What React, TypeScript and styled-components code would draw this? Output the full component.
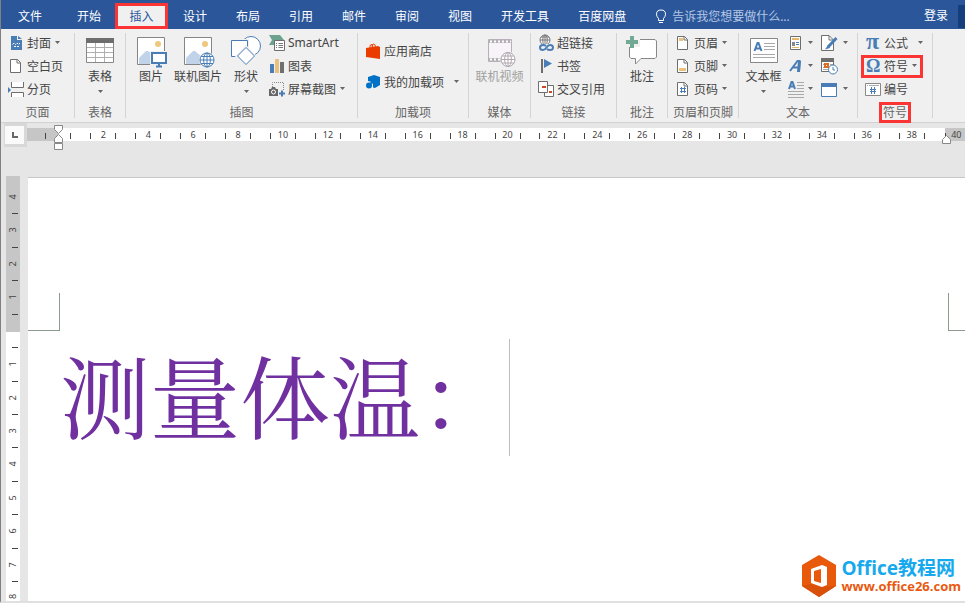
import React from "react";
import styled, { createGlobalStyle, css } from "styled-components";

const GlobalStyle = createGlobalStyle`
  *, *::before, *::after { box-sizing: border-box; }
  body { margin: 0; background: #e6e6e6; }
  body, button, input {
    font-family: "Noto Sans", "Noto Sans CJK SC", sans-serif;
    font-size: 12px;
  }
  button { border: 0; padding: 0; margin: 0; background: none; color: inherit; white-space: nowrap; }
`;

const blue = "#2b579a";
const red = "#fb3434";
const ink = "#444444";
const steel = "#4a7db5";
const line = "#6e6e6e";

const Window = styled.div`
  display: flex;
  flex-direction: column;
  min-height: 100vh;
  overflow: hidden;
  border-left: 1px solid #808080;
  border-bottom: 2px solid #e0e0e0;
  color: ${ink};
`;

const TabBar = styled.nav`
  display: flex;
  align-items: stretch;
  height: 29px;
  background: ${blue};
  color: #ffffff;
`;

const FileTab = styled.button`
  width: 58px;
  margin-right: 4px;
  padding-top: 3px;
`;

const Tab = styled.button<{ $active?: boolean }>`
  flex: none;
  margin-right: 1px;
  padding: 3px 14px 0;
  ${(p) =>
    p.$active &&
    css`
      width: 53px;
      margin: 3px 1px 0 -1px;
      padding: 0;
      border: 3px solid ${red};
      background: #f0f0f0;
      color: ${blue};
    `}
`;

const TellMe = styled.label`
  display: flex;
  align-items: center;
  flex: 1;
  gap: 5px;
  min-width: 0;
  padding: 3px 0 0 14px;
`;

const TellMeInput = styled.input`
  flex: 1;
  min-width: 0;
  padding: 0;
  border: 0;
  outline: 0;
  background: transparent;
  color: #ffffff;
  &::placeholder { color: #b4c6e4; opacity: 1; }
`;

const SignIn = styled.a`
  padding: 3px 10px 0;
  line-height: 26px;
  color: #ffffff;
  text-decoration: none;
`;

const Share = styled.span`
  width: 7px;
  margin: 5px 0 1px;
  background: #143f7c;
`;

const RibbonBar = styled.div`
  display: flex;
  height: 94px;
  background: #f0f0f0;
  border-bottom: 1px solid #d2d2d2;
`;

const Group = styled.section<{ $w: number }>`
  display: flex;
  flex-direction: column;
  flex: none;
  width: ${(p) => p.$w}px;
  padding-top: 3px;
`;

const Divider = styled.span`
  flex: none;
  width: 1px;
  margin: 4px 0;
  background: #d4d4d4;
`;

const Tools = styled.div<{ $pad?: number }>`
  display: flex;
  flex: none;
  height: 70px;
  padding-left: ${(p) => p.$pad ?? 0}px;
`;

const Caption = styled.h2<{ $marked?: boolean }>`
  flex: none;
  align-self: center;
  margin: 0;
  padding: 0 1px;
  border: 3px solid ${(p) => (p.$marked ? red : "transparent")};
  font-size: 12px;
  font-weight: 400;
  line-height: 15px;
  color: #666666;
  white-space: nowrap;
`;

const Stack = styled.div<{ $loose?: boolean }>`
  display: flex;
  flex-direction: column;
  align-items: flex-start;
  padding-top: ${(p) => (p.$loose ? 4 : 0)}px;
  & > button { height: ${(p) => (p.$loose ? 31 : 23)}px; }
`;

const SmallButton = styled.button<{ $gap?: number; $marked?: boolean }>`
  display: flex;
  align-items: center;
  gap: ${(p) => p.$gap ?? 3}px;
  padding-bottom: 2px;
  ${(p) =>
    p.$marked &&
    css`
      margin: 0 -4px;
      padding: 0 3px 2px 1px;
      border: 3px solid ${red};
    `}
`;

const BigButton = styled.button<{ $w: number; $dim?: boolean }>`
  display: flex;
  flex-direction: column;
  align-items: center;
  flex: none;
  width: ${(p) => p.$w}px;
  padding-top: 4px;
  line-height: 18px;
  color: ${(p) => (p.$dim ? "#a0a0a0" : ink)};
`;

const ArrowIcon = styled.svg<{ $space?: number }>`
  display: block;
  flex: none;
  margin-left: ${(p) => p.$space ?? 0}px;
`;

const BigArrow = styled.span`
  padding-top: 4px;
`;

const Icon = styled.svg`
  display: block;
  flex: none;
  overflow: visible;
`;

const Glyph = styled.text`
  font-family: "Liberation Serif", serif;
  font-weight: 700;
  fill: ${steel};
`;

const Arrow = ({ space }: { space?: number }) => (
  <ArrowIcon $space={space} width="5" height="3" viewBox="0 0 5 3" aria-hidden="true">
    <path d="M0 0h5L2.5 3z" fill="#666" />
  </ArrowIcon>
);

const S = ({ children, w = 16 }: { children: React.ReactNode; w?: number }) => (
  <Icon width={w} height="16" viewBox={`0 0 ${w} 16`} fill="none" aria-hidden="true">{children}</Icon>
);
const L = ({ children }: { children: React.ReactNode }) => (
  <Icon width="32" height="32" viewBox="0 0 32 32" fill="none" aria-hidden="true">{children}</Icon>
);

const Globe = ({ x, y, r, c }: { x: number; y: number; r: number; c: string }) => (
  <g transform={`translate(${x} ${y})`} stroke={c}>
    <circle r={r + 1} fill="#f0f0f0" stroke="none" />
    <circle r={r} fill="#fff" />
    <ellipse rx={r * 0.48} ry={r} />
    <path d={`M0 ${-r}V${r}M${-r} 0H${r}M${-r * 0.86} ${-r * 0.5}H${r * 0.86}M${-r * 0.86} ${r * 0.5}H${r * 0.86}`} />
  </g>
);

const PageShape = ({ x = 2.5 }: { x?: number }) => (
  <g transform={`translate(${x} 1.5)`}>
    <path d="M0 0H7L10 3V13H0z" fill="#fff" stroke={line} />
    <path d="M6.500 0V3.500H10" stroke={line} />
  </g>
);

const CoverIcon = () => (
  <S>
    <path d="M3 1H9V5H14V15H3z" fill={steel} />
    <path d="M10 1L14 4H10z" fill={steel} />
    <path d="M4.500 9.500l1.500-1.500 1.500 1.500 1.500-1.500 1.500 1.500 1.500-1.500M6 11.500h6" stroke="#fff" strokeDasharray="2 1" />
  </S>
);
const BlankIcon = () => <S><PageShape /></S>;
const BreakIcon = () => (
  <S>
    <path d="M3.500 1V6.500H15.500V1" fill="#fff" stroke={line} />
    <path d="M3.500 16V11.500H15.500V16" fill="#fff" stroke={line} />
    <path d="M0 6L3 9 0 12z" fill={steel} />
  </S>
);
const TableIcon = () => (
  <L>
    <path d="M2.500 2.500H29.500V26.500H2.500z" fill="#fff" stroke="#888" />
    <path d="M2 2H30V7H2z" fill="#6e6e6e" />
    <path d="M11.500 7V26M20.500 7V26M3 11.500H29M3 16.500H29M3 21.500H29" stroke="#b0b0b0" />
  </L>
);
const PictureBase = () => (
  <>
    <path d="M2.500 1.500H29.500V28.500H2.500z" fill="#fff" stroke="#858585" />
    <circle cx="23" cy="8" r="3" fill="#efc77e" />
    <path d="M4 28V22L11 15H13L20 21V28z" fill="#c0d3e8" />
  </>
);
const PictureIcon = () => (
  <L>
    <PictureBase />
    <path d="M15 15H33V32H15z" fill="#f0f0f0" />
    <path d="M17 17H31V27H17z" fill="#fff" stroke={steel} strokeWidth="2" />
    <path d="M24 28V30M21 30.500H27" stroke={steel} strokeWidth="2" />
  </L>
);
const OnlinePictureIcon = () => <L><PictureBase /><Globe x={25} y={24} r={7} c={steel} /></L>;
const ShapesIcon = () => (
  <L>
    <circle cx="21" cy="10" r="9.500" fill="#fff" stroke={steel} />
    <path d="M1.500 4.500H17.500V21.500H1.500z" fill="#fff" stroke="#f0f0f0" strokeWidth="3" />
    <path d="M1.500 4.500H17.500V20.500H1.500z" fill="#fff" stroke={steel} />
    <path d="M16 11L25 20.500 16 30 7 20.500z" fill="#fff" stroke="#f0f0f0" strokeWidth="3" />
    <path d="M16 11.500L24.500 20 16 28.500 7.500 20z" fill="#fff" stroke={steel} />
  </L>
);
const SmartArtIcon = () => (
  <S>
    <path d="M0 0H11L15 5V6H5V10H0L3 5z" fill="#6ba38f" />
    <path d="M5.500 5.500H15.500V15.500H5.500z" fill="#fff" stroke={line} />
    <path d="M7 8.500H8M9.500 8.500H14M7 10.500H8M9.500 10.500H14M7 12.500H8M9.500 12.500H14" stroke="#777" />
  </S>
);
const ChartIcon = () => (
  <S><path d="M1 6H5V15H1z" fill={steel} /><path d="M6 1H10V15H6z" fill="#e9c07c" /><path d="M11 4H15V15H11z" fill="#707070" /></S>
);
const ScreenshotIcon = () => (
  <S>
    <path d="M3.500 6V1.500H14.500V10" stroke="#888" strokeDasharray="1 1" />
    <path d="M0 8H2L3 6H6L7 8H9V15H0z" fill="#666" />
    <circle cx="4.500" cy="11" r="2" stroke="#fff" />
    <path d="M10 12.500H16M13 9.500V15.500" stroke={steel} strokeWidth="2" />
  </S>
);
const StoreIcon = () => (
  <S>
    <path d="M1 5L13 3 15 4V16L1 14z" fill="#eb3c00" />
    <path d="M5 5Q4 1.500 7 1.500L8 4M7 4Q7 .500 9 1 10 1 10.500 4" stroke="#eb3c00" />
  </S>
);
const AddinsIcon = () => (
  <S>
    <path d="M9 1L15 3V11L10 14 8 13.500V10Q6 7 3 7V3z" fill="#0072c6" />
    <circle cx="4" cy="11.500" r="3" fill="#0072c6" />
    <path d="M5 10L7 8.500" stroke="#0072c6" strokeWidth="2" />
  </S>
);
const VideoIcon = () => (
  <L>
    <path d="M4.500 3.500H27.500V25.500H4.500z" fill="#f8f3f8" stroke="#b8b0b8" />
    <path d="M5 4H27V7H5zM5 22H18V25H5z" fill="#b4afb4" />
    <path d="M6 5.500H27M6 23.500H18" stroke="#fff" strokeWidth="2" strokeDasharray="2 2" />
    <Globe x={24} y={23.5} r={7} c="#b0a8b0" />
  </L>
);
const LinkIcon = () => (
  <S>
    <g transform="translate(7 5)" stroke="#777"><circle r="5" fill="#fff" /><ellipse rx="2.200" ry="5" /><path d="M-5 0H5M-4-3H4M0-5V5" /></g>
    <path d="M1 9H16V16H1z" fill="#f0f0f0" />
    <path d="M8 11Q7 10 5 10 2 10 2 12.500T5 15Q7 15 8.500 12.500T12 10Q15 10 15 12.500T12 15Q10 15 9 14" stroke={steel} strokeWidth="2" />
  </S>
);
const BookmarkIcon = () => <S><path d="M3 1H5V15H3z" fill={line} /><path d="M6 1L14 5.500 6 10z" fill={steel} /></S>;
const CrossRefIcon = () => (
  <S>
    <path d="M6.500 4.500H15.500V15.500H6.500z" fill="#fff" stroke={line} />
    <path d="M.500.500H9.500V11.500H.500z" fill="#fff" stroke={line} />
    <path d="M4 6H8M11 11H14" stroke="#d24726" strokeWidth="2" />
  </S>
);
const CommentIcon = () => (
  <L>
    <path d="M4.500 4.500Q4.500 3.500 6 3.500H29L30.500 5V21L29 22.500H15L9.500 28V22.500H5L3.500 21V7z" fill="#fff" stroke="#888" />
    <path d="M0 0H14V11H0z" fill="#f0f0f0" />
    <path d="M4 0H8V4H12V8H8V12H4V8H0V4H4z" fill="#72a995" />
  </L>
);
const HeaderIcon = () => <S><PageShape /><path d="M4 3H8V6H4z" fill="#edc078" /></S>;
const FooterIcon = () => <S><PageShape /><path d="M4 10H11V13H4z" fill="#edc078" /></S>;
const NumberIcon = () => (
  <S><PageShape /><path d="M6.500 6V12M9.500 6V12M5 7.500H11M5 10.500H11" stroke={steel} /></S>
);
const TextBoxIcon = () => (
  <L>
    <path d="M2.500 2.500H29.500V26.500H2.500z" fill="#fff" stroke="#888" />
    <path d="M6.500 15L9.500 7H10.500L13.500 15M7.500 12.500H12.500" stroke={steel} strokeWidth="2" />
    <path d="M16 7.500H27M16 10.500H27M16 13.500H27M5 18.500H27M5 21.500H27" stroke="#a8a8a8" />
  </L>
);
const QuickPartsIcon = () => (
  <S>
    <path d="M2.500 1.500H12.500V14.500H2.500z" fill="#fff" stroke={line} />
    <path d="M4 3H11V5H4z" fill="#e7b765" /><path d="M4 7H7V11H4z" fill="#888" />
    <path d="M8 7.500H11M8 9.500H11" stroke={steel} /><path d="M4 12.500H11" stroke="#e7b765" />
  </S>
);
const WordArtIcon = () => (
  <S><path d="M2 13L9.500 3H11.500L11 13M5 9.500H11" stroke={steel} strokeWidth="2" /><path d="M10 3H13L12 14H9z" fill={steel} /></S>
);
const DropCapIcon = () => (
  <S>
    <path d="M1 8L3.500 1H4.500L7 8M2 5.500H6" stroke={steel} strokeWidth="2" />
    <path d="M9 1.500H16M9 4.500H16M9 7.500H16M0 10.500H16M0 13.500H16M0 16.500H16" stroke="#a8a8a8" />
  </S>
);
const SignatureIcon = () => (
  <S w={18}>
    <path d="M.500.500H8L12.500 5V15.500H.500z" fill="#fff" stroke={line} />
    <path d="M8 .500V5H12" stroke={line} />
    <path d="M15.500 3L7 12" stroke={steel} strokeWidth="3" /><path d="M7 10L4 14.500 9 13z" fill={steel} />
  </S>
);
const DateIcon = () => (
  <S w={18}>
    <path d="M.500 1.500H12.500V13.500H.500z" fill="#fff" stroke={line} /><path d="M0 0H13V4H0z" fill={line} />
    <path d="M2 6.500H3M9 6.500H12M2 9.500H3M2 11.500H7" stroke="#aaa" />
    <path d="M4 6H7V9H4z" stroke="#e06b1f" strokeWidth="2" />
    <circle cx="12" cy="11.500" r="4.500" fill="#fff" stroke={steel} /><path d="M12 9V12H14" stroke={steel} />
  </S>
);
const ObjectIcon = () => (
  <S w={18}><path d="M.500 2.500H15.500V15.500H.500z" fill="#fff" stroke={steel} /><path d="M0 2H16V6H0z" fill={steel} /></S>
);
const PiIcon = () => <S><Glyph x="1" y="14" fontSize="24">π</Glyph></S>;
const OmegaIcon = () => <S><Glyph x="1" y="14" fontSize="18">Ω</Glyph></S>;
const ListNumberIcon = () => (
  <S>
    <path d="M.500 2.500H15.500V14.500H.500z" fill="#fff" stroke="#888" />
    <path d="M6.500 6V13M9.500 6V13M5 8.500H11M5 10.500H11" stroke={steel} />
    <path d="M2 4.500H3M4 4.500H14" stroke="#aaa" />
  </S>
);
const BulbIcon = () => (
  <Icon width="12" height="15" viewBox="0 0 12 15" fill="none" stroke="#fff" aria-hidden="true">
    <path d="M3.500 9.500Q1.500 7.500 1.500 5.200 1.500 1 6 1T10.500 5.200Q10.500 7.500 8.500 9.500V11.500H3.500z" />
    <path d="M4 13.500H8" />
  </Icon>
);

const Small = (p: { icon: React.ReactNode; label: string; gap?: number; arrow?: number; marked?: boolean }) => (
  <SmallButton type="button" $gap={p.gap} $marked={p.marked}>
    {p.icon}
    <span>{p.label}</span>
    {p.arrow !== undefined && <Arrow space={p.arrow} />}
  </SmallButton>
);

const IconOnly = ({ icon, name, arrow = true }: { icon: React.ReactNode; name: string; arrow?: boolean }) => (
  <SmallButton type="button" $gap={4} aria-label={name}>{icon}{arrow && <Arrow />}</SmallButton>
);

const Big = (p: { icon: React.ReactNode; label: string; w: number; arrow?: boolean; dim?: boolean }) => (
  <BigButton type="button" $w={p.w} $dim={p.dim} disabled={p.dim}>
    {p.icon}
    <span>{p.label}</span>
    {p.arrow && <BigArrow><Arrow /></BigArrow>}
  </BigButton>
);

const RibbonGroup = (p: { title: string; w: number; pad?: number; marked?: boolean; children: React.ReactNode }) => (
  <>
    <Group $w={p.w}>
      <Tools $pad={p.pad}>{p.children}</Tools>
      <Caption $marked={p.marked}>{p.title}</Caption>
    </Group>
    <Divider />
  </>
);

const RulerRow = styled.div`
  display: flex;
  align-items: flex-start;
  height: 24px;
`;

const TabStop = styled.button`
  display: flex;
  align-items: center;
  justify-content: center;
  flex: none;
  width: 23px;
  height: 24px;
  margin: 0 0 0 3px;
  border: 3px solid #d8d8d8;
  border-left-width: 1px;
  background: #fafafa;
`;

const Ruler = styled.div`
  position: relative;
  display: flex;
  flex: 1;
  height: 13px;
  margin-top: 5px;
  padding-left: 9px;
  background: linear-gradient(90deg, #c6c6c6 31px, #ffffff 31px calc(100% - 20px), #c6c6c6 calc(100% - 20px));
`;

const RulerCell = styled.span<{ $last?: boolean }>`
  display: flex;
  align-items: center;
  justify-content: ${(p) => (p.$last ? "flex-start" : "center")};
  gap: ${(p) => (p.$last ? 5 : 2)}px;
  flex: ${(p) => (p.$last ? "0 0 31px" : "1 1 0")};
  padding-left: ${(p) => (p.$last ? 11 : 0)}px;
  font-size: 9px;
  line-height: 13px;
`;

const RulerNumber = styled.span`
  width: 20px;
  text-align: center;
`;

const Tick = styled.span`
  width: 1px;
  height: 6px;
  margin-top: 2px;
  background: #444444;
`;

const Marker = styled.svg<{ $right?: boolean }>`
  position: absolute;
  top: ${(p) => (p.$right ? 7 : -3)}px;
  ${(p) => (p.$right ? "right: 14px;" : "left: 27px;")}
`;

const Workspace = styled.main`
  display: flex;
  flex: 1;
  padding: 29px 0 0 5px;
`;

const SideRuler = styled.div`
  display: flex;
  flex-direction: column;
  flex: none;
  width: 14px;
  margin-right: 8px;
  padding-top: 5px;
  background: linear-gradient(#c6c6c6 156px, #ffffff 156px);
`;

const SideCell = styled.span<{ $last?: boolean }>`
  display: flex;
  flex-direction: column;
  align-items: center;
  justify-content: center;
  flex: ${(p) => (p.$last ? "0 0 19px" : "1 1 0")};
  min-height: 0;
  padding-top: ${(p) => (p.$last ? 10 : 0)}px;
  font-size: 9px;
  line-height: 12px;
`;

const SideNumber = styled.span`
  display: flex;
  align-items: center;
  justify-content: center;
  flex: 1;
  writing-mode: vertical-rl;
  rotate: 180deg;
`;

const SideTick = styled.span`
  width: 6px;
  height: 1px;
  margin-left: 4px;
  background: #444444;
`;

const Page = styled.article`
  display: flex;
  flex-direction: column;
  flex: 1;
  min-width: 0;
  margin-top: 1px;
  border-top: 1px solid #c6c6c6;
  background: #ffffff;
`;

const Margins = styled.div`
  display: flex;
  justify-content: space-between;
  margin-top: 115px;
`;

const Crop = styled.span<{ $right?: boolean }>`
  width: ${(p) => (p.$right ? 17 : 32)}px;
  height: 38px;
  border: 0 solid #8c9c8c;
  border-bottom-width: 1px;
  ${(p) => (p.$right ? "border-left-width: 1px;" : "border-right-width: 1px;")}
`;

const Paragraph = styled.p`
  display: flex;
  height: 117px;
  margin: 8px 0 0;
  padding-left: 32px;
  font-family: SimSun, "Noto Serif CJK SC", "Noto Sans CJK SC", serif;
  font-size: 90px;
  font-weight: 400;
  line-height: 108px;
  color: #7030a0;
  white-space: nowrap;
`;

const Caret = styled.span`
  width: 1px;
  margin-left: -1px;
  background: #bdbdbd;
`;

const Brand = styled.a`
  display: flex;
  align-items: center;
  align-self: flex-end;
  gap: 4px;
  margin: auto 4px 3px 0;
  font-weight: 700;
  text-decoration: none;
`;

const BrandText = styled.span`
  display: flex;
  flex-direction: column;
`;

const BrandName = styled.span`
  font-family: "Open Sans", "Noto Sans CJK SC", sans-serif;
  font-size: 19px;
  line-height: 20px;
  color: #16a9ee;
`;

const BrandUrl = styled.span`
  font-family: "Open Sans", sans-serif;
  font-size: 13px;
  line-height: 16px;
  color: #e85a10;
`;

const tabs = ["开始", "插入", "设计", "布局", "引用", "邮件", "审阅", "视图", "开发工具", "百度网盘"];
const rulerNumbers = Array.from({ length: 20 }, (_, i) => i * 2);
const sideNumbers = [4, 3, 2, 1, 0, 1, 2, 3, 4, 5, 6, 7];

export default function App() {
  return (
    <Window>
      <GlobalStyle />
      <TabBar>
        <FileTab type="button">文件</FileTab>
        {tabs.map((t) => (
          <Tab key={t} type="button" $active={t === "插入"}>{t}</Tab>
        ))}
        <TellMe>
          <BulbIcon />
          <TellMeInput aria-label="告诉我您想要做什么" placeholder="告诉我您想要做什么..." />
        </TellMe>
        <SignIn href="#signin">登录</SignIn>
        <Share />
      </TabBar>

      <RibbonBar>
        <RibbonGroup title="页面" w={73} pad={7}>
          <Stack>
            <Small icon={<CoverIcon />} label="封面" arrow={1} />
            <Small icon={<BlankIcon />} label="空白页" />
            <Small icon={<BreakIcon />} label="分页" />
          </Stack>
        </RibbonGroup>
        <RibbonGroup title="表格" w={50}>
          <Big icon={<TableIcon />} label="表格" w={50} arrow />
        </RibbonGroup>
        <RibbonGroup title="插图" w={231} pad={3}>
          <Big icon={<PictureIcon />} label="图片" w={44} />
          <Big icon={<OnlinePictureIcon />} label="联机图片" w={50} />
          <Big icon={<ShapesIcon />} label="形状" w={46} arrow />
          <Stack>
            <Small icon={<SmartArtIcon />} label="SmartArt" />
            <Small icon={<ChartIcon />} label="图表" />
            <Small icon={<ScreenshotIcon />} label="屏幕截图" arrow={1} />
          </Stack>
        </RibbonGroup>
        <RibbonGroup title="加载项" w={110} pad={7}>
          <Stack $loose>
            <Small icon={<StoreIcon />} label="应用商店" />
            <Small icon={<AddinsIcon />} label="我的加载项" arrow={7} />
          </Stack>
        </RibbonGroup>
        <RibbonGroup title="媒体" w={61}>
          <Big icon={<VideoIcon />} label="联机视频" w={61} dim />
        </RibbonGroup>
        <RibbonGroup title="链接" w={85} pad={7}>
          <Stack>
            <Small icon={<LinkIcon />} label="超链接" />
            <Small icon={<BookmarkIcon />} label="书签" />
            <Small icon={<CrossRefIcon />} label="交叉引用" />
          </Stack>
        </RibbonGroup>
        <RibbonGroup title="批注" w={50}>
          <Big icon={<CommentIcon />} label="批注" w={50} />
        </RibbonGroup>
        <RibbonGroup title="页眉和页脚" w={70} pad={7}>
          <Stack>
            <Small icon={<HeaderIcon />} label="页眉" arrow={1} />
            <Small icon={<FooterIcon />} label="页脚" arrow={1} />
            <Small icon={<NumberIcon />} label="页码" arrow={1} />
          </Stack>
        </RibbonGroup>
        <RibbonGroup title="文本" w={118}>
          <Big icon={<TextBoxIcon />} label="文本框" w={49} arrow />
          <Stack>
            <IconOnly icon={<QuickPartsIcon />} name="文档部件" />
            <IconOnly icon={<WordArtIcon />} name="艺术字" />
            <IconOnly icon={<DropCapIcon />} name="首字下沉" />
          </Stack>
          <Tools $pad={8}>
            <Stack>
              <IconOnly icon={<SignatureIcon />} name="签名行" />
              <IconOnly icon={<DateIcon />} name="日期和时间" arrow={false} />
              <IconOnly icon={<ObjectIcon />} name="对象" />
            </Stack>
          </Tools>
        </RibbonGroup>
        <RibbonGroup title="符号" w={74} pad={7} marked>
          <Stack>
            <Small icon={<PiIcon />} label="公式" arrow={7} />
            <Small icon={<OmegaIcon />} label="符号" arrow={1} marked />
            <Small icon={<ListNumberIcon />} label="编号" />
          </Stack>
        </RibbonGroup>
      </RibbonBar>

      <RulerRow>
        <TabStop type="button" aria-label="制表符">
          <Icon width="6" height="6" viewBox="0 0 6 6" aria-hidden="true"><path d="M1 0V5H6" stroke="#666" strokeWidth="2" fill="none" /></Icon>
        </TabStop>
        <Ruler>
          {rulerNumbers.map((n) => (
            <RulerCell key={n}>
              <Tick />
              <RulerNumber>{n || ""}</RulerNumber>
              <Tick />
            </RulerCell>
          ))}
          <RulerCell $last>
            <Tick />
            <span>40</span>
          </RulerCell>
          <Marker width="9" height="26" viewBox="0 0 9 26" fill="#fff" stroke="#888" aria-hidden="true">
            <path d="M.500.500H8.500V4.500L4.500 8.500.500 4.500z" />
            <path d="M.500 17.500V13.500L4.500 9.500 8.500 13.500V17.500z" />
            <path d="M.500 18.500H8.500V24.500H.500z" />
          </Marker>
          <Marker $right width="9" height="9" viewBox="0 0 9 9" fill="#fff" stroke="#888" aria-hidden="true">
            <path d="M.500 8.500V4.500L4.500.500 8.500 4.500V8.500z" />
          </Marker>
        </Ruler>
      </RulerRow>

      <Workspace>
        <SideRuler>
          {sideNumbers.map((n, i) => (
            <SideCell key={i}>
              <SideNumber>{n || ""}</SideNumber>
              <SideTick />
            </SideCell>
          ))}
          <SideCell $last>
            <SideNumber>8</SideNumber>
          </SideCell>
        </SideRuler>
        <Page>
          <Margins>
            <Crop />
            <Crop $right />
          </Margins>
          <Paragraph>
            <span>测量体温：</span>
            <Caret />
          </Paragraph>
          <Brand href="#office26">
            <Icon width="36" height="44" viewBox="0 0 36 44" aria-hidden="true">
              <path d="M18 1L35 11V32L18 43 1 32V11z" fill="#e8590c" />
              <path d="M1 32L10 30 18 33 35 32 18 43z" fill="#d9500b" />
              <path d="M10 15L21 11 26 13V31L21 33 10 29z" fill="#fff" />
              <path d="M13 17L20 15V29L13 27z" fill="#e8590c" />
            </Icon>
            <BrandText>
              <BrandName>Office教程网</BrandName>
              <BrandUrl>www.office26.com</BrandUrl>
            </BrandText>
          </Brand>
        </Page>
      </Workspace>
    </Window>
  );
}
